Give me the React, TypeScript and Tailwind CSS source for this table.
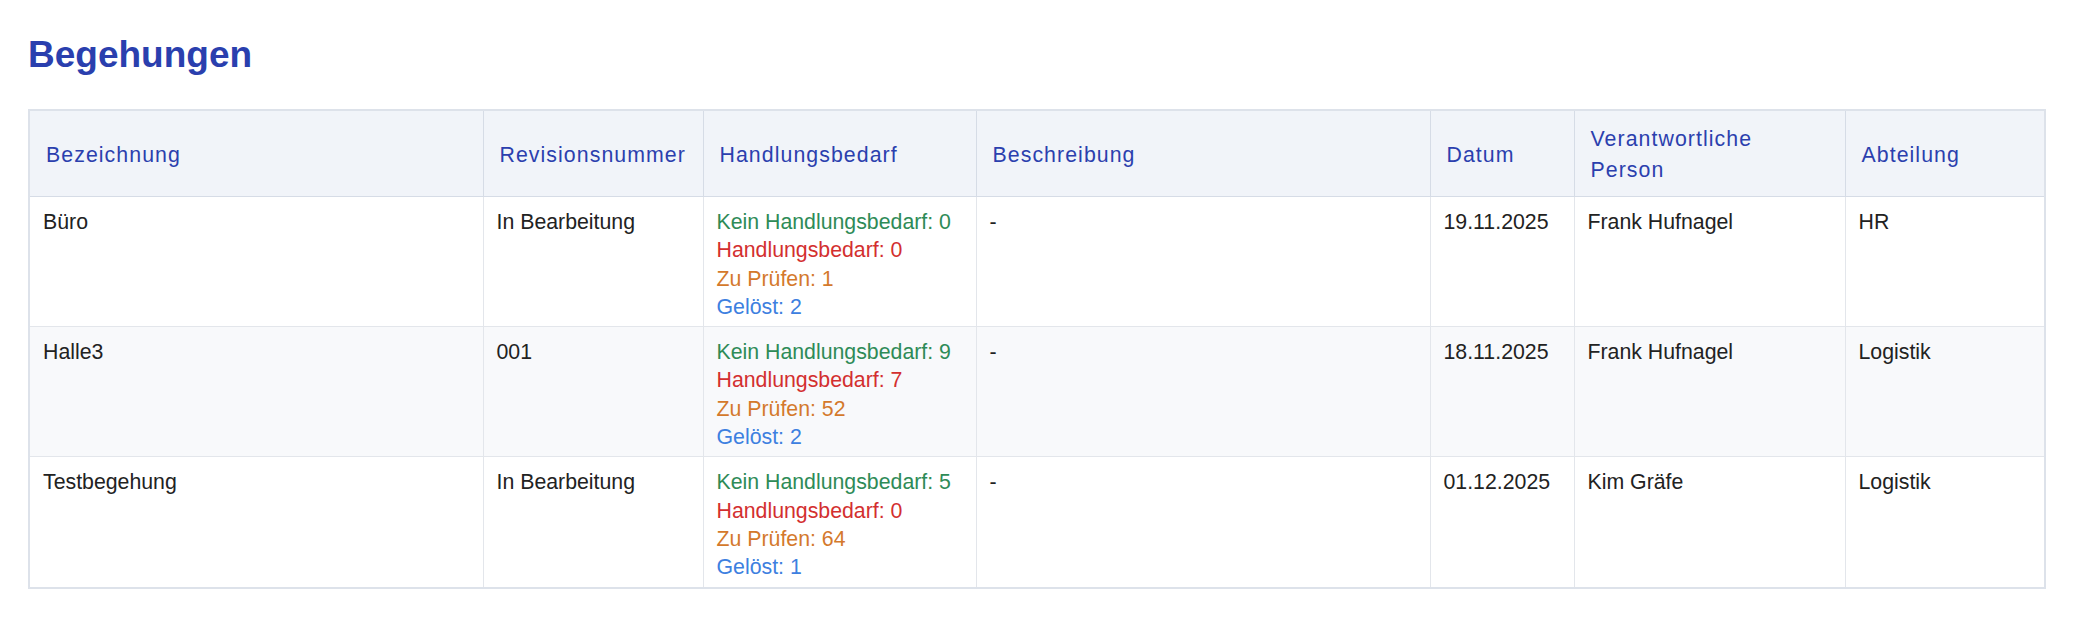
import React from 'react';

type Row = {
    name: string;
    revision: string;
    counts: { kein: number; bedarf: number; pruefen: number; geloest: number };
    description: string;
    date: string;
    person: string;
    department: string;
};

const rows: Row[] = [
    { name: 'Büro', revision: 'In Bearbeitung', counts: { kein: 0, bedarf: 0, pruefen: 1, geloest: 2 }, description: '-', date: '19.11.2025', person: 'Frank Hufnagel', department: 'HR' },
    { name: 'Halle3', revision: '001', counts: { kein: 9, bedarf: 7, pruefen: 52, geloest: 2 }, description: '-', date: '18.11.2025', person: 'Frank Hufnagel', department: 'Logistik' },
    { name: 'Testbegehung', revision: 'In Bearbeitung', counts: { kein: 5, bedarf: 0, pruefen: 64, geloest: 1 }, description: '-', date: '01.12.2025', person: 'Kim Gräfe', department: 'Logistik' },
];

const columns = [
    { label: 'Bezeichnung', width: 'w-[454px]' },
    { label: 'Revisionsnummer', width: 'w-[220px]' },
    { label: 'Handlungsbedarf', width: 'w-[273px]' },
    { label: 'Beschreibung', width: 'w-[454px]' },
    { label: 'Datum', width: 'w-[144px]' },
    { label: 'Verantwortliche Person', width: 'w-[271px]' },
    { label: 'Abteilung', width: 'w-[200px]' },
];

const th = 'border border-[#d6dce6] bg-[#f1f4f9] pl-[16px] pr-3 pt-[13px] pb-[10px] text-left align-middle font-normal text-[#2b3fae] tracking-[0.05em] leading-[31px]';
const td = 'border border-[#e3e6eb] pl-[13px] pr-3 pt-[11px] pb-[5px] align-top text-[#222222]';

export default function App() {
    return (
        <div className="min-h-screen bg-white pl-[28px] pr-[44px] text-[21.3px] font-['Liberation_Sans',Arial,sans-serif]">
            <h1 className="pt-[33px] text-[37px] font-bold leading-[44px] text-[#2a3fae]">Begehungen</h1>

            <table className="mt-[32px] w-[2016px] table-fixed border-collapse border-2 border-[#dde2ea]">
                <thead>
                    <tr>
                        {columns.map((c) => (
                            <th key={c.label} className={`${th} ${c.width}`}>
                                {c.label === 'Verantwortliche Person' ? (
                                    <>Verantwortliche<br />Person</>
                                ) : c.label}
                            </th>
                        ))}
                    </tr>
                </thead>
                <tbody className="leading-[28.3px]">
                    {rows.map((r, i) => (
                        <tr key={r.name} className={i % 2 === 1 ? 'bg-[#f8f9fb]' : 'bg-white'}>
                            <td className={td}>{r.name}</td>
                            <td className={td}>{r.revision}</td>
                            <td className={td}>
                                <div className="text-[#2e8b57]">Kein Handlungsbedarf: {r.counts.kein}</div>
                                <div className="text-[#d32f2f]">Handlungsbedarf: {r.counts.bedarf}</div>
                                <div className="text-[#d4792c]">Zu Prüfen: {r.counts.pruefen}</div>
                                <div className="text-[#3d80e0]">Gelöst: {r.counts.geloest}</div>
                            </td>
                            <td className={td}>{r.description}</td>
                            <td className={td}>{r.date}</td>
                            <td className={td}>{r.person}</td>
                            <td className={td}>{r.department}</td>
                        </tr>
                    ))}
                </tbody>
            </table>
        </div>
    );
}
